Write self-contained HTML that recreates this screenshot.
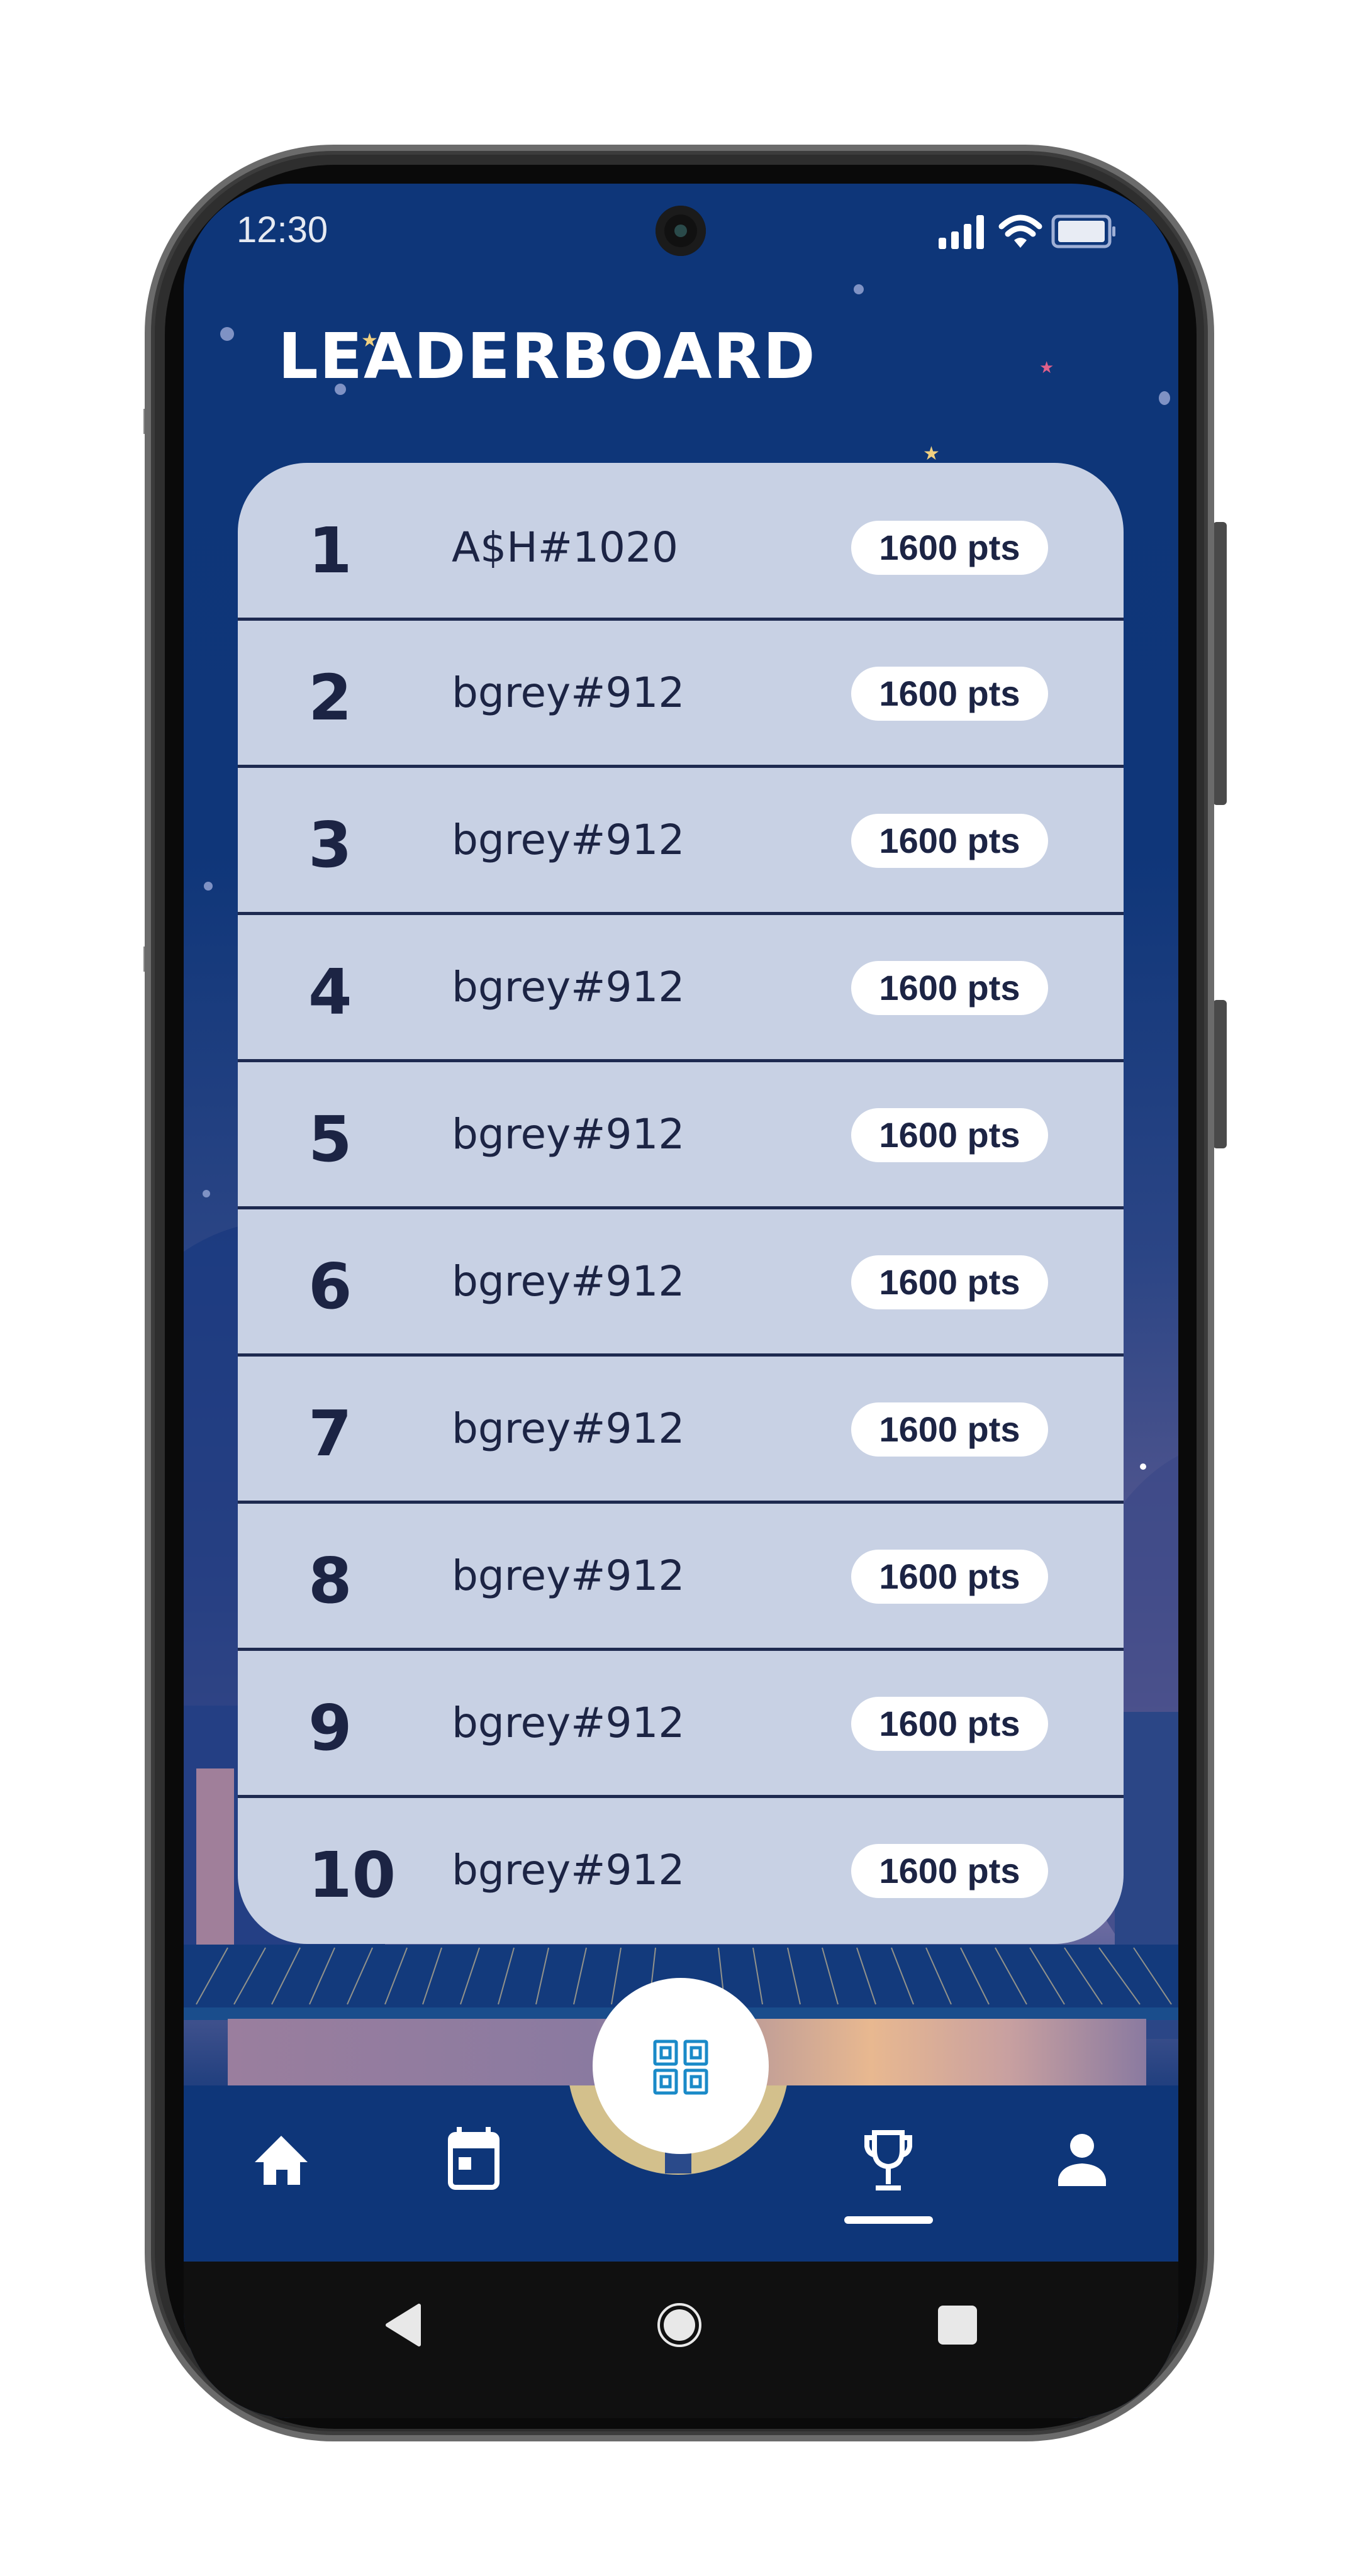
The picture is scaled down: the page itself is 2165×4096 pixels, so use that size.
<!DOCTYPE html>
<html><head><meta charset="utf-8"><style>
*{margin:0;padding:0;box-sizing:border-box}
body{width:2165px;height:4096px;background:#fff;position:relative;overflow:hidden;font-family:"DejaVu Sans","Liberation Sans",sans-serif}
.abs{position:absolute}
.body{left:230px;top:230px;width:1700px;height:3652px;border-radius:300px;background:#2e2e2e;border:10px solid #6b6b6b;box-shadow:inset 0 0 0 6px #3c3c3c}
.bezel{left:262px;top:262px;width:1640px;height:3600px;border-radius:270px;background:#0a0a0a}
.screen{left:292px;top:292px;width:1581px;height:3553px;border-radius:170px;overflow:hidden;background:linear-gradient(#0e3679 0%,#0f3679 30%,#2b4585 48%,#55578f 62%,#9a7aa0 72%,#6a6aa0 78%,#22407f 85%,#0e3679 88%)}
.row{position:absolute;left:0;width:1408px;height:234px;color:#1c2444}
.rank{position:absolute;left:112px;font-weight:bold;font-size:100px;line-height:1}
.name{position:absolute;left:340px;font-size:66px;line-height:1}
.pill{position:absolute;left:975px;width:313px;height:86px;border-radius:43px;background:#fff;font-family:"Liberation Sans",sans-serif;font-weight:bold;font-size:56px;text-align:center;line-height:86px;color:#1c2444}
.div{position:absolute;left:0;width:1408px;height:5px;background:#1e2a50}
.star{position:absolute;border-radius:50%;background:#7f92c4}
</style></head><body>
<div class="abs" style="left:1928px;top:830px;width:22px;height:450px;background:#4a4a4a;border-radius:6px"></div>
<div class="abs" style="left:1928px;top:1590px;width:22px;height:236px;background:#4a4a4a;border-radius:6px"></div>
<div class="abs" style="left:228px;top:650px;width:14px;height:40px;background:#888"></div>
<div class="abs" style="left:228px;top:1505px;width:14px;height:40px;background:#888"></div>
<div class="abs body"></div>
<div class="abs bezel"></div>
<div class="abs screen">
  <div class="abs" style="left:-200px;top:1650px;width:700px;height:1000px;border-radius:50%;background:#1a3a80;opacity:.8"></div>
  <div class="abs" style="left:1400px;top:2000px;width:600px;height:900px;border-radius:45%;background:#3d4a88;opacity:.8"></div>
  <div class="abs" style="left:-100px;top:2420px;width:420px;height:500px;background:#243f84"></div>
  <div class="abs" style="left:20px;top:2520px;width:60px;height:300px;background:#a07f9a"></div>
  <div class="abs" style="left:1480px;top:2430px;width:120px;height:520px;background:#2b4686"></div>
  <div class="star" style="left:58px;top:228px;width:22px;height:22px"></div>
  <div class="star" style="left:240px;top:318px;width:18px;height:18px"></div>
  <div class="star" style="left:1065px;top:160px;width:16px;height:16px"></div>
  <div class="star" style="left:1550px;top:330px;width:18px;height:22px"></div>
  <div class="star" style="left:32px;top:1110px;width:14px;height:14px"></div>
  <div class="star" style="left:30px;top:1600px;width:12px;height:12px"></div>
  <div class="star" style="left:1520px;top:2035px;width:10px;height:10px;background:#fff"></div>
  <div class="abs" style="left:1175px;top:412px;color:#f0d080;font-size:30px">★</div>
  <div class="abs" style="left:1360px;top:278px;color:#e0608a;font-size:26px">★</div>
  <div class="abs" style="left:282px;top:232px;color:#f0d080;font-size:30px">★</div>
  <div class="abs" style="left:84px;top:40px;font-family:'Liberation Sans',sans-serif;font-size:58px;color:#e6eaf2">12:30</div>
  <div class="abs" style="left:750px;top:35px;width:80px;height:80px;border-radius:50%;background:#111;box-shadow:inset 0 0 0 14px #1b1b1b"><div class="abs" style="left:30px;top:30px;width:20px;height:20px;border-radius:50%;background:#2a4a4a"></div></div>
  <svg class="abs" style="left:1200px;top:40px" width="300" height="70" viewBox="0 0 300 70">
    <rect x="0" y="46" width="12" height="18" rx="3" fill="#fff"/>
    <rect x="20" y="36" width="12" height="28" rx="3" fill="#fff"/>
    <rect x="40" y="24" width="12" height="40" rx="3" fill="#fff"/>
    <rect x="60" y="10" width="12" height="54" rx="3" fill="#fff"/>
    <path d="M100 28 Q130 0 160 28" stroke="#fff" stroke-width="9" fill="none" stroke-linecap="round"/>
    <path d="M110 40 Q130 22 150 40" stroke="#fff" stroke-width="9" fill="none" stroke-linecap="round"/>
    <path d="M120 50 L130 62 L140 50 Q130 42 120 50Z" fill="#fff"/>
    <rect x="182" y="12" width="90" height="48" rx="8" fill="none" stroke="#9fb0d6" stroke-width="5"/>
    <rect x="190" y="19" width="74" height="34" rx="4" fill="#e8ecf4"/>
    <rect x="276" y="28" width="5" height="16" rx="2" fill="#9fb0d6"/>
  </svg>
  <div class="abs" style="left:150px;top:216px;font-weight:bold;font-size:100px;color:#fff;letter-spacing:2px">LEADERBOARD</div>
  <div class="abs" style="left:86px;top:444px;width:1408px;height:2355px;background:#c8d1e4;border-radius:110px;overflow:hidden">
    <div class="row" style="top:0;height:247px"><div class="rank" style="top:90px">1</div><div class="name" style="top:102px">A$H#1020</div><div class="pill" style="top:92px">1600 pts</div></div>
    <div class="div" style="top:246px"></div>
    <div class="row" style="top:251px"><div class="rank" style="top:73px">2</div><div class="name" style="top:82px">bgrey#912</div><div class="pill" style="top:73px">1600 pts</div></div>
    <div class="div" style="top:480px"></div>
    <div class="row" style="top:485px"><div class="rank" style="top:73px">3</div><div class="name" style="top:82px">bgrey#912</div><div class="pill" style="top:73px">1600 pts</div></div>
    <div class="div" style="top:714px"></div>
    <div class="row" style="top:719px"><div class="rank" style="top:73px">4</div><div class="name" style="top:82px">bgrey#912</div><div class="pill" style="top:73px">1600 pts</div></div>
    <div class="div" style="top:948px"></div>
    <div class="row" style="top:953px"><div class="rank" style="top:73px">5</div><div class="name" style="top:82px">bgrey#912</div><div class="pill" style="top:73px">1600 pts</div></div>
    <div class="div" style="top:1182px"></div>
    <div class="row" style="top:1187px"><div class="rank" style="top:73px">6</div><div class="name" style="top:82px">bgrey#912</div><div class="pill" style="top:73px">1600 pts</div></div>
    <div class="div" style="top:1416px"></div>
    <div class="row" style="top:1421px"><div class="rank" style="top:73px">7</div><div class="name" style="top:82px">bgrey#912</div><div class="pill" style="top:73px">1600 pts</div></div>
    <div class="div" style="top:1650px"></div>
    <div class="row" style="top:1655px"><div class="rank" style="top:73px">8</div><div class="name" style="top:82px">bgrey#912</div><div class="pill" style="top:73px">1600 pts</div></div>
    <div class="div" style="top:1884px"></div>
    <div class="row" style="top:1889px"><div class="rank" style="top:73px">9</div><div class="name" style="top:82px">bgrey#912</div><div class="pill" style="top:73px">1600 pts</div></div>
    <div class="div" style="top:2118px"></div>
    <div class="row" style="top:2123px"><div class="rank" style="top:73px">10</div><div class="name" style="top:82px">bgrey#912</div><div class="pill" style="top:73px">1600 pts</div></div>
  </div>
  <svg class="abs" style="left:0;top:2800px" width="1581" height="120" viewBox="0 0 1581 120">
    <rect width="1581" height="120" fill="#133a7c"/>
    <g stroke="#c8b890" stroke-width="2" opacity=".7">
      <line x1="20" y1="95" x2="70" y2="5"/><line x1="80" y1="95" x2="130" y2="5"/><line x1="140" y1="95" x2="185" y2="5"/><line x1="200" y1="95" x2="240" y2="5"/><line x1="260" y1="95" x2="300" y2="5"/><line x1="320" y1="95" x2="355" y2="5"/><line x1="380" y1="95" x2="410" y2="5"/><line x1="440" y1="95" x2="470" y2="5"/><line x1="500" y1="95" x2="525" y2="5"/><line x1="560" y1="95" x2="580" y2="5"/><line x1="620" y1="95" x2="640" y2="5"/><line x1="680" y1="95" x2="695" y2="5"/><line x1="740" y1="95" x2="750" y2="5"/><line x1="860" y1="95" x2="850" y2="5"/><line x1="920" y1="95" x2="905" y2="5"/><line x1="980" y1="95" x2="960" y2="5"/><line x1="1040" y1="95" x2="1015" y2="5"/><line x1="1100" y1="95" x2="1070" y2="5"/><line x1="1160" y1="95" x2="1125" y2="5"/><line x1="1220" y1="95" x2="1180" y2="5"/><line x1="1280" y1="95" x2="1235" y2="5"/><line x1="1340" y1="95" x2="1290" y2="5"/><line x1="1400" y1="95" x2="1345" y2="5"/><line x1="1460" y1="95" x2="1400" y2="5"/><line x1="1520" y1="95" x2="1455" y2="5"/><line x1="1570" y1="95" x2="1510" y2="5"/>
    </g>
    <rect y="100" width="1581" height="20" fill="#1a4d8c"/>
  </svg>
  <div class="abs" style="left:70px;top:2918px;width:1460px;height:110px;background:linear-gradient(90deg,#9a7e9e,#8a7aa0 40%,#e8b890 70%,#c8a0a0 85%,#8a7aa0)"></div>
  <div class="abs" style="left:0;top:3024px;width:1581px;height:282px;background:#0e3679"></div>
  <div class="abs" style="left:560px;top:3024px;width:460px;height:200px;overflow:hidden">
    <div class="abs" style="left:50px;top:-210px;width:352px;height:352px;border-radius:50%;background:#d3c08c"></div>
    <div class="abs" style="left:205px;top:60px;width:42px;height:80px;background:#2a4a8a"></div>
  </div>
  <div class="abs" style="left:650px;top:2853px;width:280px;height:280px;border-radius:50%;background:#fff"></div>
  <svg class="abs" style="left:746px;top:2951px" width="88" height="88" viewBox="0 0 88 88" fill="none" stroke="#1a8ac8" stroke-width="5">
    <rect x="3" y="3" width="34" height="36" rx="2"/><rect x="13" y="13" width="14" height="16"/>
    <rect x="51" y="3" width="34" height="36" rx="2"/><rect x="61" y="13" width="14" height="16"/>
    <rect x="3" y="49" width="34" height="36" rx="2"/><rect x="13" y="59" width="14" height="16"/>
    <rect x="51" y="49" width="34" height="36" rx="2"/><rect x="61" y="59" width="14" height="16"/>
  </svg>
  <svg class="abs" style="left:113px;top:3100px" width="84" height="84" viewBox="0 0 84 84"><path d="M42 4 L84 46 L72 46 L72 82 L52 82 L52 58 L34 58 L34 82 L14 82 L14 46 L0 46Z" fill="#fff"/></svg>
  <svg class="abs" style="left:420px;top:3090px" width="82" height="100" viewBox="0 0 82 100"><rect x="14" y="0" width="8" height="18" fill="#fff"/><rect x="60" y="0" width="8" height="18" fill="#fff"/><rect x="4" y="12" width="74" height="84" rx="8" fill="none" stroke="#fff" stroke-width="8"/><rect x="4" y="12" width="74" height="22" fill="#fff"/><rect x="17" y="48" width="20" height="20" fill="#fff"/></svg>
  <svg class="abs" style="left:1080px;top:3093px" width="80" height="100" viewBox="0 0 80 100" fill="none" stroke="#fff" stroke-width="8"><path d="M18 6 H62 V34 Q62 58 40 60 Q18 58 18 34Z"/><path d="M18 14 H6 V28 Q8 40 20 42"/><path d="M62 14 H74 V28 Q72 40 60 42"/><path d="M40 60 V88"/><path d="M20 94 H60"/></svg>
  <div class="abs" style="left:1050px;top:3232px;width:141px;height:12px;border-radius:6px;background:#fff"></div>
  <svg class="abs" style="left:1390px;top:3100px" width="76" height="84" viewBox="0 0 76 84"><circle cx="38" cy="20" r="19" fill="#fff"/><path d="M0 84 V74 Q4 50 38 48 Q72 50 76 74 V84Z" fill="#fff"/></svg>
  <div class="abs" style="left:0;top:3304px;width:1581px;height:260px;background:#101010"></div>
  <svg class="abs" style="left:320px;top:3370px" width="60" height="70" viewBox="0 0 60 70"><path d="M54 4 L4 35 L54 66Z" fill="#e8e8e8" stroke="#e8e8e8" stroke-width="6" stroke-linejoin="round"/></svg>
  <div class="abs" style="left:753px;top:3370px;width:70px;height:70px;border-radius:50%;border:4px solid #e8e8e8;background:#101010"><div class="abs" style="left:6px;top:6px;width:50px;height:50px;border-radius:50%;background:#e8e8e8"></div></div>
  <div class="abs" style="left:1199px;top:3374px;width:62px;height:62px;border-radius:8px;background:#e8e8e8"></div>
</div>
</body></html>
